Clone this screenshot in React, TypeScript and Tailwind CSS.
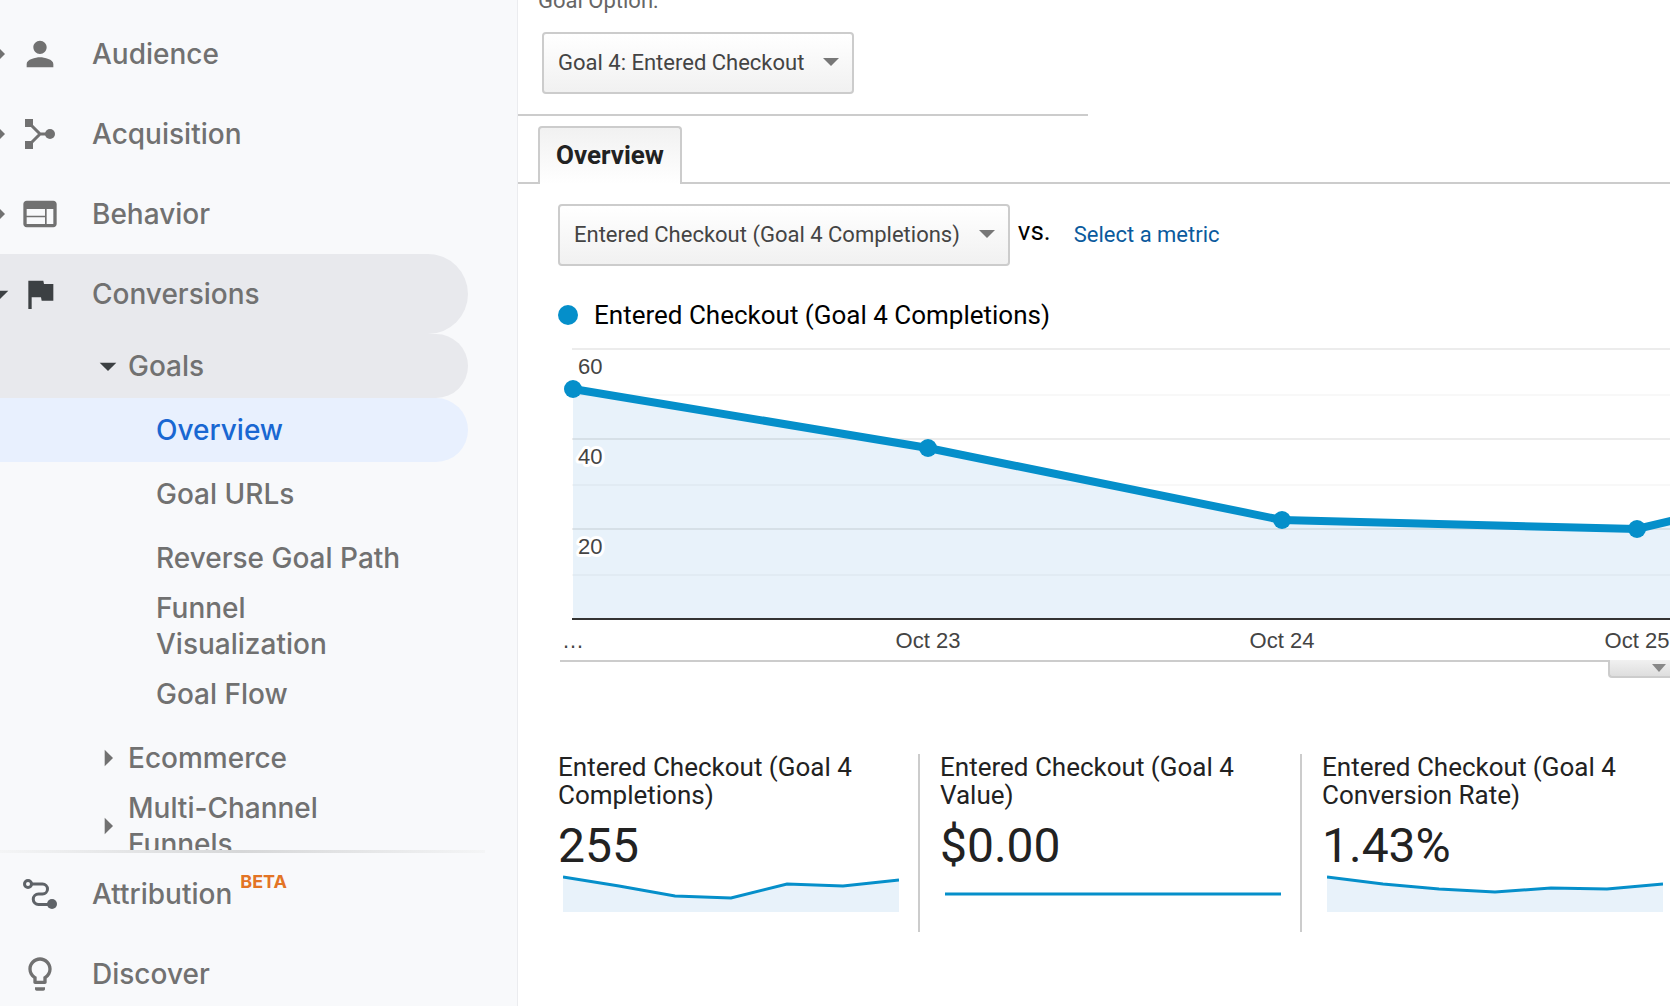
import type { IconType } from "react-icons";
import {
  MdArrowDropDown,
  MdArrowRight,
  MdFlag,
  MdLightbulbOutline,
  MdPerson,
  MdWeb,
} from "react-icons/md";
import clsx from "clsx";

const BLUE = "#058fca";
const AREA = "#e8f2fa";

const goalPages = [
  "Overview",
  "Goal URLs",
  "Reverse Goal Path",
  "Funnel Visualization",
  "Goal Flow",
];

const metrics = [
  {
    name: "Entered Checkout (Goal 4 Completions)",
    value: "255",
    trend: [3, 12, 22, 24, 10, 12, 6],
    filled: true,
  },
  {
    name: "Entered Checkout (Goal 4 Value)",
    value: "$0.00",
    trend: [20, 20, 20, 20, 20, 20, 20],
    filled: false,
  },
  {
    name: "Entered Checkout (Goal 4 Conversion Rate)",
    value: "1.43%",
    trend: [3, 10, 15, 18, 14, 15, 10],
    filled: true,
  },
];

const chartPoints = [
  { x: 15, y: 41, label: "…" },
  { x: 370, y: 100, label: "Oct 23" },
  { x: 724, y: 172, label: "Oct 24" },
  { x: 1079, y: 181, label: "Oct 25" },
  { x: 1434, y: 96, label: "Oct 26" },
];

function AcquisitionIcon({ className }: { className?: string }) {
  return (
    <svg viewBox="0 0 40 40" className={className} fill="currentColor">
      <path d="M5 5h8v8H5zM5 27h8v8H5z" />
      <circle cx="30" cy="20" r="5" />
      <path
        d="M11 11l9 9-9 9M19 20h11"
        fill="none"
        stroke="currentColor"
        strokeWidth="3"
      />
    </svg>
  );
}

function AttributionIcon({ className }: { className?: string }) {
  return (
    <svg viewBox="0 0 40 40" className={className} fill="none">
      <circle cx="8" cy="10" r="3.5" stroke="#5f6368" strokeWidth="3" />
      <path
        d="M12 10h10.500a5 5 0 0 1 0 10h-4a5 5 0 0 0 0 10.500H30"
        stroke="#5f6368"
        strokeWidth="3"
      />
      <circle cx="32" cy="30" r="5" fill="#5f6368" />
    </svg>
  );
}

function SectionLink({
  label,
  Icon,
  arrow = true,
  open = false,
  badge,
}: {
  label: string;
  Icon: IconType | typeof AcquisitionIcon;
  arrow?: boolean;
  open?: boolean;
  badge?: string;
}) {
  return (
    <a
      href="#"
      className={clsx(
        "mr-[49px] flex h-20 shrink-0 items-center rounded-r-full",
        open && "bg-[#e8e9ed]",
      )}
    >
      <span className="-ml-5 size-10 shrink-0">
        {arrow && !open && <MdArrowRight className="size-10" />}
        {open && <MdArrowDropDown className="size-10 text-[#3c4043]" />}
      </span>
      <Icon className={clsx("size-10 shrink-0", open && "text-[#3c4043]")} />
      <span className="ml-8">{label}</span>
      {badge && (
        <span className="mb-6 ml-2 text-lg font-bold text-[#e37425]">
          {badge}
        </span>
      )}
    </a>
  );
}

function GroupLink({ label, open = false }: { label: string; open?: boolean }) {
  return (
    <a
      href="#"
      className={clsx(
        "mr-[49px] flex min-h-16 shrink-0 items-center rounded-r-full pl-22",
        open && "bg-[#e8e9ed]",
      )}
    >
      {open ? (
        <MdArrowDropDown className="size-10 shrink-0 text-[#3c4043]" />
      ) : (
        <MdArrowRight className="size-10 shrink-0" />
      )}
      <span className="max-w-60">{label}</span>
    </a>
  );
}

function Sidebar() {
  return (
    <aside className="flex h-full w-[518px] shrink-0 flex-col border-r border-[#ebecef] bg-[#f8f9fb] font-['Inter',sans-serif] text-[28px] leading-9 font-medium text-[#717171]">
      <nav className="flex min-h-0 flex-1 flex-col overflow-hidden pt-3.5">
        <SectionLink label="Audience" Icon={MdPerson} />
        <SectionLink label="Acquisition" Icon={AcquisitionIcon} />
        <SectionLink label="Behavior" Icon={MdWeb} />
        <SectionLink label="Conversions" Icon={MdFlag} open />
        <GroupLink label="Goals" open />
        {goalPages.map((page) => (
          <a
            key={page}
            href="#"
            className={clsx(
              "mr-[49px] flex min-h-16 shrink-0 items-center rounded-r-full pl-39",
              page === "Overview" && "bg-[#e8f0fe] text-[#1967d2]",
            )}
          >
            <span className={page.startsWith("Funnel") ? "w-56" : ""}>
              {page}
            </span>
          </a>
        ))}
        <GroupLink label="Ecommerce" />
        <GroupLink label="Multi-Channel Funnels" />
      </nav>
      <div className="h-39 shrink-0 overflow-hidden">
        <div className="mr-8 mb-px h-[3px] bg-linear-to-r from-[#f4f5f6] via-[#d6d7d8] to-[#f4f5f6]" />
        <SectionLink
          label="Attribution"
          Icon={AttributionIcon}
          arrow={false}
          badge="BETA"
        />
        <SectionLink label="Discover" Icon={MdLightbulbOutline} arrow={false} />
      </div>
    </aside>
  );
}

function DropdownButton({ label }: { label: string }) {
  return (
    <button
      type="button"
      className="flex h-[62px] items-center gap-[19px] rounded border-2 border-[#ccc] bg-linear-to-b from-white to-[#f1f1f1] pr-[13px] pb-0.5 pl-3.5 text-[22px] text-[#444]"
    >
      {label}
      <span className="border-x-8 border-t-8 border-x-transparent border-t-[#777]" />
    </button>
  );
}

function GoalChart() {
  const line = chartPoints.map((p) => `${p.x},${p.y}`).join(" ");

  return (
    <svg
      width="100%"
      height="312"
      className="block font-['Liberation_Sans',Arial,sans-serif] text-[22px]"
      role="img"
      aria-label="Entered Checkout (Goal 4 Completions) by day"
    >
      {/* area goes under the grid so the grid lines stay visible */}
      <polygon points={`${line} 1434,271 15,271`} fill={AREA} />
      {[1, 91, 181].map((y) => (
        <g key={y} stroke="#000" strokeWidth="2">
          <line x1="14" x2="100%" y1={y} y2={y} opacity="0.07" />
          <line x1="14" x2="100%" y1={y + 46} y2={y + 46} opacity="0.025" />
        </g>
      ))}
      <line x1="14" x2="100%" y1="271" y2="271" stroke="#333" strokeWidth="2" />
      <polyline points={line} fill="none" stroke={BLUE} strokeWidth="8" />
      {chartPoints.map((p) => (
        <g key={p.label}>
          <circle cx={p.x} cy={p.y} r="9" fill={BLUE} />
          <text x={p.x} y="300" textAnchor="middle" fill="#444">
            {p.label}
          </text>
        </g>
      ))}
      {[60, 40, 20].map((tick, i) => (
        <text
          key={tick}
          x="20"
          y={26 + i * 90}
          fill="#444"
          stroke="#fff"
          strokeWidth="6"
          strokeLinejoin="round"
          className="[paint-order:stroke]"
        >
          {tick}
        </text>
      ))}
    </svg>
  );
}

function Sparkline({ trend, filled }: { trend: number[]; filled: boolean }) {
  const line = trend.map((y, i) => `${i * 56},${y}`).join(" ");

  return (
    <svg width="336" height="38" className="ml-[5px] block" aria-hidden="true">
      {filled && <polygon points={`${line} 336,38 0,38`} fill={AREA} />}
      <polyline points={line} fill="none" stroke={BLUE} strokeWidth="3" />
    </svg>
  );
}

function App() {
  return (
    <div className="flex h-screen overflow-hidden bg-white font-['Roboto',sans-serif] text-[#222]">
      <Sidebar />

      <main className="flex min-w-0 flex-1 flex-col">
        {/* --- Goal picker --- */}
        <section className="-mt-3 w-[570px] border-b-2 border-[#ccc] pb-5 pl-5">
          <h2 className="text-[22px] leading-[26px] text-[#666]">
            Goal Option:
          </h2>
          <div className="mt-[18px] ml-1 flex">
            <DropdownButton label="Goal 4: Entered Checkout" />
          </div>
        </section>

        {/* --- Tabs --- */}
        <div className="mt-2.5 flex">
          <div className="w-5 border-b-2 border-[#ccc]" />
          <button
            type="button"
            className="h-[58px] rounded-t border-2 border-b-0 border-[#ccc] bg-linear-to-b from-[#f1f1f1] to-white px-4 pb-0.5 text-[26px] font-bold"
          >
            Overview
          </button>
          <div className="flex-1 border-b-2 border-[#ccc]" />
        </div>

        {/* --- Metric selection --- */}
        <div className="mt-5 ml-10 flex items-center">
          <DropdownButton label="Entered Checkout (Goal 4 Completions)" />
          <span className="mb-2 ml-2 text-[26px] text-black">vs.</span>
          <a href="#" className="mb-0.5 ml-[23px] text-[22px] text-[#0b5a9d]">
            Select a metric
          </a>
        </div>

        <div className="mt-[33px] ml-10 flex items-center gap-4 text-[26px] leading-8 text-black">
          <span className="size-5 rounded-full bg-[#058fca]" />
          Entered Checkout (Goal 4 Completions)
        </div>

        <div className="mt-[17px] ml-10">
          <GoalChart />
        </div>
        <div className="relative ml-[42px] border-t-2 border-[#ccc]">
          <button
            type="button"
            aria-label="Annotations"
            className="absolute -top-0.5 right-0 flex h-[18px] w-[62px] justify-end rounded-bl border-b-2 border-l-2 border-[#ccc] bg-linear-to-b from-[#f1f1f1] to-[#dedede] pt-1 pr-1"
          >
            <span className="border-x-7 border-t-8 border-x-transparent border-t-[#888]" />
          </button>
        </div>

        {/* --- Metric cards --- */}
        <div className="mt-[92px] ml-10 flex gap-5">
          {metrics.map((metric) => (
            <section
              key={metric.name}
              className="h-[178px] w-[362px] shrink-0 border-r-2 border-[#ccc]"
            >
              <h3 className="-mt-px w-80 text-[26px] leading-7">
                {metric.name}
              </h3>
              <p className="mt-[9px] text-5xl leading-[56px]">{metric.value}</p>
              <Sparkline trend={metric.trend} filled={metric.filled} />
            </section>
          ))}
        </div>
      </main>
    </div>
  );
}

export default App;
